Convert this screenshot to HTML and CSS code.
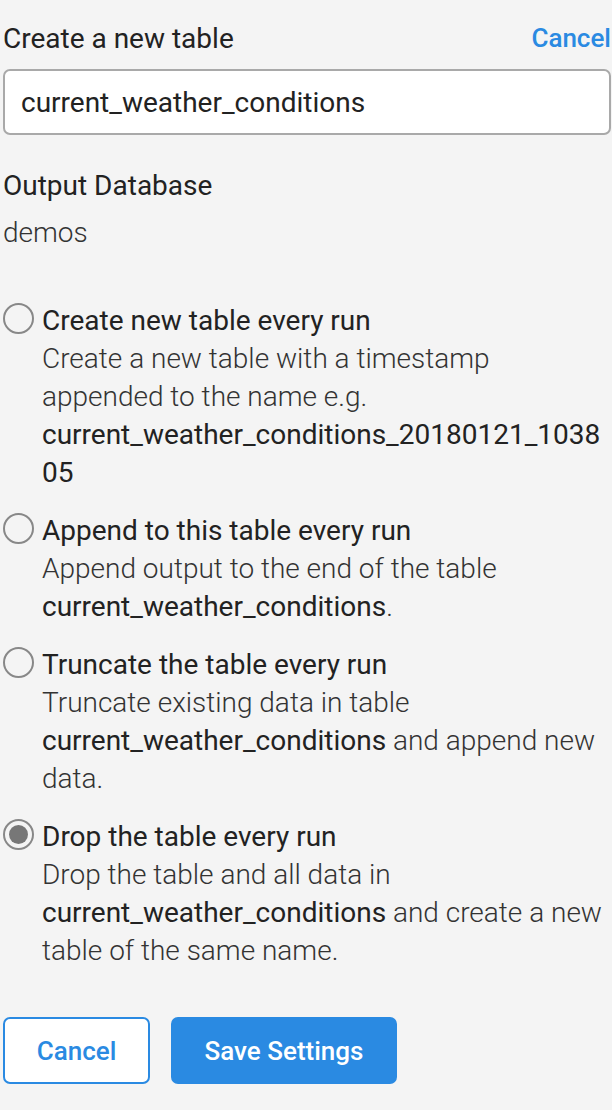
FILE: index.html
```html
<!DOCTYPE html>
<html>
<head>
<meta charset="utf-8">
<link rel="stylesheet" href="styles.css">
</head>
<body>
<div class="page">
  <div class="header">
    <div class="heading">Create a new table</div>
    <a class="link">Cancel</a>
  </div>
  <div class="input">current_weather_conditions</div>
  <div class="label">Output Database</div>
  <div class="value">demos</div>

  <div class="options">
    <div class="option">
      <span class="radio"></span>
      <div class="opt-body">
        <div class="opt-title">Create new table every run</div>
        <div class="opt-desc">Create a new table with a timestamp appended to the name e.g. <span class="code">current_weather_conditions_20180121_103805</span></div>
      </div>
    </div>
    <div class="option">
      <span class="radio"></span>
      <div class="opt-body">
        <div class="opt-title">Append to this table every run</div>
        <div class="opt-desc">Append output to the end of the table <span class="code">current_weather_conditions</span>.</div>
      </div>
    </div>
    <div class="option">
      <span class="radio"></span>
      <div class="opt-body">
        <div class="opt-title">Truncate the table every run</div>
        <div class="opt-desc">Truncate existing data in table <span class="code">current_weather_conditions</span> and append new data.</div>
      </div>
    </div>
    <div class="option">
      <span class="radio checked"></span>
      <div class="opt-body">
        <div class="opt-title">Drop the table every run</div>
        <div class="opt-desc">Drop the table and all data in <span class="code">current_weather_conditions</span> and create a new table of the same name.</div>
      </div>
    </div>
  </div>

  <div class="actions">
    <button class="btn btn-outline">Cancel</button>
    <button class="btn btn-primary">Save Settings</button>
  </div>
</div>
</body>
</html>
```
FILE: styles.css
```css
html, body {
  margin: 0;
  padding: 0;
  background: #f4f4f4;
}
body {
  font-family: Roboto, "Liberation Sans", sans-serif;
  color: #222;
}
.page {
  padding: 18px 1px 0 3px;
}
.header {
  display: flex;
  justify-content: space-between;
  align-items: center;
  height: 40px;
}
.heading {
  font-size: 28px;
  font-weight: 400;
  color: #222;
}
.link {
  font-size: 26px;
  font-weight: 500;
  color: #2a8ae2;
  margin-right: 0;
}
.input {
  margin-top: 11px;
  height: 62px;
  border: 2px solid #a9a9a9;
  border-radius: 7px;
  background: #fff;
  box-sizing: content-box;
  display: flex;
  align-items: center;
  padding: 0 16px;
  font-size: 28px;
  color: #222;
}
.label {
  margin-top: 33px;
  font-size: 28px;
  line-height: 36px;
  color: #222;
}
.value {
  margin-top: 11px;
  font-size: 28px;
  line-height: 36px;
  font-weight: 300;
  color: #333;
}
.options {
  margin-top: 51px;
  display: flex;
  flex-direction: column;
  gap: 20px;
}
.option {
  display: flex;
  align-items: flex-start;
  gap: 8px;
}
.radio {
  flex: none;
  width: 27px;
  height: 27px;
  margin-top: 1px;
  border: 2px solid #888;
  border-radius: 50%;
  position: relative;
  box-sizing: content-box;
}
.radio.checked::after {
  content: "";
  position: absolute;
  left: 4px;
  top: 4px;
  width: 19px;
  height: 19px;
  border-radius: 50%;
  background: #777;
}
.opt-body {
  font-size: 28px;
  line-height: 38px;
  min-width: 0;
}
.opt-title {
  font-weight: 400;
  color: #222;
}
.opt-desc {
  font-weight: 300;
  color: #333;
  overflow-wrap: anywhere;
}
.opt-desc .code {
  font-weight: 400;
  color: #222;
}
.actions {
  margin-top: 47px;
  display: flex;
  gap: 21px;
  align-items: center;
}
.btn {
  font-family: Roboto, "Liberation Sans", sans-serif;
  font-size: 26px;
  font-weight: 500;
  border-radius: 7px;
  height: 67px;
  cursor: pointer;
}
.btn-outline {
  width: 147px;
  background: #fff;
  color: #2a8ae2;
  border: 2px solid #2a8ae2;
}
.btn-primary {
  width: 226px;
  background: #2a8ae2;
  color: #fff;
  border: 2px solid #2a8ae2;
}
```
